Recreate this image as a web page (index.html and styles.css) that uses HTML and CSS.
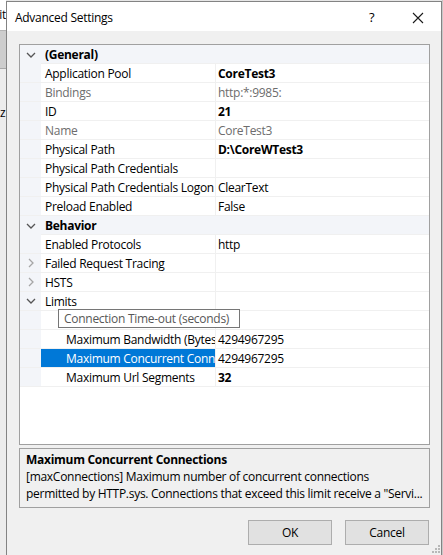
FILE: index.html
```html
<!DOCTYPE html>
<html>
<head>
<meta charset="utf-8">
<link rel="stylesheet" href="styles.css">
</head>
<body>
<div class="screen">
  <div class="bg-left">
    <div class="bg-top"><span class="bg-text">Edit</span></div>
    <div class="bg-dark"></div>
    <div class="bg-light"><span class="bg-z">z</span></div>
  </div>
  <div class="dialog">
    <div class="titlebar">
      <span class="title">Advanced Settings</span>
      <span class="help">?</span>
      <svg class="close" width="12" height="12" viewBox="0 0 12 12"><path d="M1 1 L11 11 M11 1 L1 11" stroke="#1a1a1a" stroke-width="1.1" fill="none"/></svg>
    </div>
    <div class="client">
      <div class="grid">
        <div class="row cat"><span class="gut"><svg class="chev" width="10" height="6" viewBox="0 0 10 6"><path d="M1 1 L5 5 L9 1" stroke="#555" stroke-width="1.3" fill="none"/></svg></span><span class="catname">(General)</span></div>
        <div class="row"><span class="gut"></span><span class="name">Application Pool</span><span class="val b">CoreTest3</span></div>
        <div class="row"><span class="gut"></span><span class="name grey">Bindings</span><span class="val grey">http:*:9985:</span></div>
        <div class="row"><span class="gut"></span><span class="name">ID</span><span class="val b">21</span></div>
        <div class="row"><span class="gut"></span><span class="name grey">Name</span><span class="val grey">CoreTest3</span></div>
        <div class="row"><span class="gut"></span><span class="name">Physical Path</span><span class="val b">D:\CoreWTest3</span></div>
        <div class="row"><span class="gut"></span><span class="name">Physical Path Credentials</span><span class="val"></span></div>
        <div class="row"><span class="gut"></span><span class="name">Physical Path Credentials Logon</span><span class="val">ClearText</span></div>
        <div class="row"><span class="gut"></span><span class="name">Preload Enabled</span><span class="val">False</span></div>
        <div class="row cat"><span class="gut"><svg class="chev" width="10" height="6" viewBox="0 0 10 6"><path d="M1 1 L5 5 L9 1" stroke="#555" stroke-width="1.3" fill="none"/></svg></span><span class="catname">Behavior</span></div>
        <div class="row"><span class="gut"></span><span class="name">Enabled Protocols</span><span class="val">http</span></div>
        <div class="row"><span class="gut"><svg class="chev-r" width="6" height="10" viewBox="0 0 6 10"><path d="M1 1 L5 5 L1 9" stroke="#a6a6a6" stroke-width="1.3" fill="none"/></svg></span><span class="name">Failed Request Tracing</span><span class="val"></span></div>
        <div class="row"><span class="gut"><svg class="chev-r" width="6" height="10" viewBox="0 0 6 10"><path d="M1 1 L5 5 L1 9" stroke="#a6a6a6" stroke-width="1.3" fill="none"/></svg></span><span class="name">HSTS</span><span class="val"></span></div>
        <div class="row"><span class="gut"><svg class="chev" width="10" height="6" viewBox="0 0 10 6"><path d="M1 1 L5 5 L9 1" stroke="#555" stroke-width="1.3" fill="none"/></svg></span><span class="name">Limits</span><span class="val"></span></div>
        <div class="row tip-row"><span class="gut"></span><span class="name sub"></span><span class="val"></span>
          <div class="tooltip">Connection Time-out (seconds)</div>
        </div>
        <div class="row"><span class="gut"></span><span class="name sub">Maximum Bandwidth (Bytes/second)</span><span class="val">4294967295</span></div>
        <div class="row"><span class="gut"></span><span class="name sub sel">Maximum Concurrent Connections</span><span class="val">4294967295</span></div>
        <div class="row"><span class="gut"></span><span class="name sub">Maximum Url Segments</span><span class="val b">32</span></div>
      </div>
      <div class="desc">
        <div class="desc-title">Maximum Concurrent Connections</div>
        <div class="desc-line">[maxConnections] Maximum number of concurrent connections</div>
        <div class="desc-line">permitted by HTTP.sys. Connections that exceed this limit receive a "Servi...</div>
      </div>
      <div class="buttons">
        <button class="btn">OK</button>
        <button class="btn">Cancel</button>
      </div>
      <svg class="grip" width="8" height="8" viewBox="0 0 8 8">
        <rect x="6" y="0" width="2" height="2" fill="#b8b8b8"/>
        <rect x="3" y="3" width="2" height="2" fill="#b8b8b8"/>
        <rect x="6" y="3" width="2" height="2" fill="#b8b8b8"/>
        <rect x="0" y="6" width="2" height="2" fill="#b8b8b8"/>
        <rect x="3" y="6" width="2" height="2" fill="#b8b8b8"/>
        <rect x="6" y="6" width="2" height="2" fill="#b8b8b8"/>
      </svg>
    </div>
  </div>
  <div class="bg-right"></div>
</div>
</body>
</html>
```
FILE: styles.css
```css
* { box-sizing: border-box; }
html, body { margin: 0; padding: 0; }
body {
  width: 443px;
  height: 555px;
  overflow: hidden;
  background: #e6e6e6;
  font-family: "Open Sans", "Noto Sans", sans-serif;
  font-size: 12px;
  letter-spacing: -0.28px;
  color: #000;
}
.screen {
  display: flex;
  width: 443px;
  height: 555px;
}
.bg-left {
  width: 6px;
  display: flex;
  flex-direction: column;
  overflow: hidden;
}
.bg-top {
  height: 31px;
  background: #fff;
  border-bottom: 1px solid #b4b4b4;
  position: relative;
  overflow: hidden;
}
.bg-text {
  position: absolute;
  right: 0;
  top: 6px;
  font-size: 12px;
  white-space: nowrap;
}
.bg-dark {
  height: 38px;
  background: #cdcdcd;
  border-bottom: 1px solid #a8a8a8;
}
.bg-light {
  flex: 1;
  background: #ececec;
  position: relative;
  overflow: hidden;
}
.bg-z {
  position: absolute;
  left: 0;
  top: 35px;
  font-size: 12px;
}
.bg-right {
  width: 1px;
  background: #c8c8c8;
}
.dialog {
  width: 436px;
  margin-top: 1px;
  border: 1px solid #838383;
  border-bottom: none;
  background: #f0f0f0;
  display: flex;
  flex-direction: column;
}
.titlebar {
  height: 29px;
  background: #fff;
  display: flex;
  align-items: center;
  position: relative;
}
.title {
  margin-left: 8px;
  font-size: 12px;
  margin-top: 1px;
}
.help {
  position: absolute;
  left: 362px;
  top: 6px;
  font-size: 13px;
}
.close {
  position: absolute;
  left: 405px;
  top: 10px;
}
.client {
  flex: 1;
  padding: 13px 11px 0 12px;
  position: relative;
}
.grid {
  width: 411px;
  height: 401px;
  border: 1px solid #a0a0a0;
  background: #fff;
  position: relative;
}
.row {
  display: grid;
  grid-template-columns: 21px 174px 1fr;
  height: 19px;
  border-bottom: 1px solid #f0f0f0;
  position: relative;
}
.gut {
  background: #f3f5f9;
  display: flex;
  align-items: center;
  justify-content: center;
}
.row.cat {
  background: #f3f5f9;
  grid-template-columns: 21px 1fr;
}
.catname {
  font-weight: bold;
  padding-left: 4px;
  line-height: 19px;
}
.name {
  padding-left: 4px;
  line-height: 19px;
  white-space: nowrap;
  overflow: hidden;
}
.name.sub { padding-left: 25px; }
.name.sel { background: #0078d7; color: #fff; }
.val {
  border-left: 1px solid #f0f0f0;
  padding-left: 2px;
  line-height: 19px;
  white-space: nowrap;
  overflow: hidden;
}
.b { font-weight: bold; }
.grey { color: #6d6d6d; }
.tooltip {
  position: absolute;
  left: 38px;
  top: -2px;
  width: 182px;
  height: 19px;
  background: #fff;
  border: 1px solid #767676;
  color: #575757;
  line-height: 17px;
  padding-left: 5px;
  white-space: nowrap;
  overflow: hidden;
}
.desc {
  width: 411px;
  height: 60px;
  margin-top: 3px;
  border: 1px solid #a0a0a0;
  padding: 2px 6px 0 6px;
  line-height: 17px;
}
.desc-title { font-weight: bold; }
.desc-line { white-space: nowrap; overflow: hidden; }
.buttons {
  display: flex;
  justify-content: flex-end;
  gap: 13px;
  margin-top: 12px;
  width: 410px;
}
.btn {
  width: 84px;
  height: 25px;
  background: #e1e1e1;
  border: 1px solid #adadad;
  font-family: inherit;
  font-size: 12px;
  letter-spacing: inherit;
  color: #000;
  padding: 0;
}
.grip {
  position: absolute;
  right: 1px;
  bottom: 2px;
}
```
